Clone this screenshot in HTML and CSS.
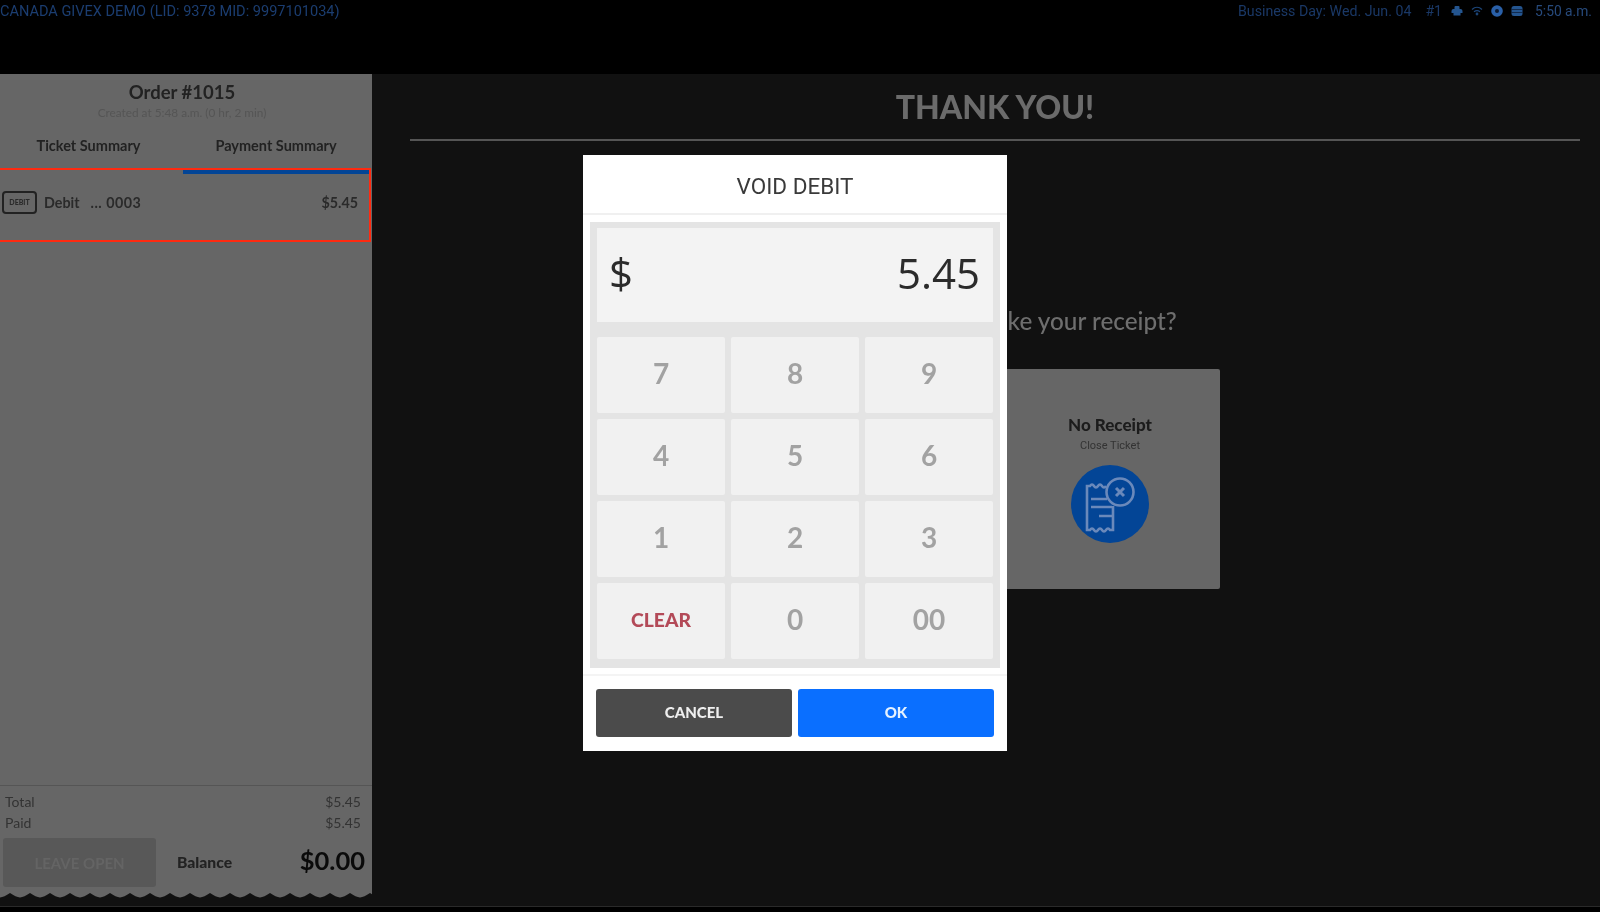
FILE: index.html
```html
<!DOCTYPE html>
<html lang="en">
<head>
<meta charset="utf-8">
<title>Void Debit</title>
<link rel="stylesheet" href="styles.css">
</head>
<body>
<div class="screen">
  <header class="topbar">
    <span class="store">CANADA GIVEX DEMO (LID: 9378 MID: 9997101034)</span>
    <div class="status">
      <span>Business Day: Wed. Jun. 04</span>
      <span class="term">#1</span>
      <svg class="ico" viewBox="0 0 12 12"><path d="M.5 8V6q0-2 2-2h1V2q0-1 1-1h3q1 0 1 1v2h1q2 0 2 2v2H9.500v2.500h-7V8z" fill="#24558f"/></svg>
      <svg class="ico" viewBox="0 0 12 12" fill="none" stroke="#1c4578" stroke-width="1.2"><path d="M1 4.500c3-2.800 7-2.800 10 0M3 6.800c2-1.600 4-1.600 6 0"/><circle cx="6" cy="9" r=".8" fill="#1c4578"/></svg>
      <svg class="ico" viewBox="0 0 12 12"><circle cx="6" cy="6" r="5.800" fill="#2a60a8"/><circle cx="6" cy="6" r="2" fill="#0a1830"/></svg>
      <svg class="ico" viewBox="0 0 12 12"><rect x=".5" y="1" width="11" height="10" rx="2.500" fill="#24558f"/><path d="M.5 4.500h11M.5 7.500h11" stroke="#0a1830" stroke-width=".7"/></svg>
      <span class="time">5:50 a.m.</span>
    </div>
  </header>
  <div class="body">
    <aside class="side">
      <div class="order">
        <h2>Order #1015</h2>
        <p>Created at 5:48 a.m. (0 hr, 2 min)</p>
      </div>
      <div class="tabs">
        <div class="tab">Ticket Summary</div>
        <div class="tab">Payment Summary</div>
      </div>
      <div class="tabline"><i></i></div>
      <div class="pay">
        <span class="card-ico">DEBIT</span>
        <span>Debit</span>
        <span class="digits">... 0003</span>
        <span class="amt">$5.45</span>
      </div>
      <div class="spacer"></div>
      <div class="totals">
        <div class="row"><span>Total</span><span>$5.45</span></div>
        <div class="row"><span>Paid</span><span>$5.45</span></div>
      </div>
      <div class="balance">
        <div class="leave">LEAVE OPEN</div>
        <span class="bal-label">Balance</span>
        <span class="bal-val">$0.00</span>
      </div>
      <svg class="wave" height="7" width="372"><defs><pattern id="w" width="20" height="7" patternUnits="userSpaceOnUse"><path d="M0 7V5.500Q4 5 10 1Q16 5 20 5.500V7Z" fill="#111"/></pattern></defs><rect width="372" height="7" fill="url(#w)"/></svg>
    </aside>
    <main class="main">
      <h1>THANK YOU!</h1>
      <p class="q">How would you take your receipt?</p>
      <div class="cards">
        <div class="rcard"></div>
        <div class="rcard">
          <b>No Receipt</b>
          <small>Close Ticket</small>
          <svg class="rico" viewBox="0 0 78 78">
            <circle cx="39" cy="39" r="39" fill="#034596"/>
            <g fill="none" stroke="#6a89bb" stroke-width="2.600">
              <path d="M35 21q-2 3-4 0t-4 0t-4 0t-4 0l-3 0V65l3 0q2-3 4 0t4 0t4 0t4 0t4 0h3V41"/>
              <circle cx="49" cy="27" r="13.500"/>
              <path d="M45 23l8 8M53 23l-8 8" stroke-width="3"/>
              <path d="M20 34h16M20 42h21M28 51h13"/>
            </g>
          </svg>
        </div>
      </div>
    </main>
  </div>
  <div class="foot"></div>
</div>
<div class="modal">
  <div class="m-title">VOID DEBIT</div>
  <div class="pad">
    <div class="display"><span>$</span><span>5.45</span></div>
    <div class="keys">
      <div class="key">7</div><div class="key">8</div><div class="key">9</div>
      <div class="key">4</div><div class="key">5</div><div class="key">6</div>
      <div class="key">1</div><div class="key">2</div><div class="key">3</div>
      <div class="key clear">CLEAR</div><div class="key">0</div><div class="key">00</div>
    </div>
  </div>
  <div class="actions">
    <div class="btn cancel">CANCEL</div>
    <div class="btn ok">OK</div>
  </div>
</div>
<div class="hl"></div>
</body>
</html>
```
FILE: styles.css
```css
* { box-sizing: border-box; }
html, body { margin: 0; height: 100%; background: #000; overflow: hidden; }
body { font-family: "Lato", "Open Sans", sans-serif; position: relative; filter: blur(.5px); }
.screen { height: 912px; display: flex; flex-direction: column; }
.topbar { height: 74px; flex: none; background: #000; display: flex; justify-content: space-between; align-items: flex-start; padding: 3px 8px 0 0; color: #1b3d70; font: 14.550px "Roboto", sans-serif; }
.status { display: flex; align-items: center; font-size: 14.200px; color: #1a3866; }
.term { margin-left: 14px; }
.ico { width: 12px; height: 12px; margin-left: 8px; }
.term + .ico { margin-left: 9px; }
.time { margin-left: 12px; font-size: 13.800px; color: #274a7c; }
.body { flex: 1; display: flex; min-height: 0; background: #111; }
.side { width: 372px; flex: none; margin-bottom: 7px; background: #666; display: flex; flex-direction: column; color: #1b1b1b; }
.order { text-align: center; padding: 7px 8px 0 0; }
.order h2 { margin: 0; font-size: 18.500px; font-weight: 700; color: #222; line-height: 22px; }
.order p { margin: 3px 0 0; font-size: 11.800px; color: #555; line-height: 14px; }
.tabs { display: flex; margin-top: 12px; height: 26px; align-items: center; }
.tab { width: 183px; padding-right: 6px; text-align: center; font-size: 14.500px; font-weight: 700; color: #222; }
.tab + .tab { padding: 0; width: 186px; white-space: nowrap; }
.tabline { height: 4px; margin-top: 12px; }
.tabline i { display: block; width: 186px; height: 4px; margin-left: 183px; background: #034596; }
.pay { display: flex; align-items: center; height: 56px; padding: 0 14px 0 2px; font-size: 14.300px; font-weight: 700; color: #2a2a2a; }
.card-ico { width: 35px; height: 23px; border: 2px solid #222; border-radius: 4px; font-size: 7px; font-weight: 900; display: flex; align-items: center; justify-content: center; margin-right: 7px; }
.digits { margin-left: 11px; letter-spacing: .5px; }
.amt { margin-left: auto; }
.spacer { flex: 1; }
.totals { border-top: 1px solid #555; padding: 5px 11px 0 5px; font-size: 14px; color: #333; }
.row { display: flex; justify-content: space-between; line-height: 21px; }
.balance { display: flex; align-items: center; padding: 0 7px 0 3px; margin-top: 5px; height: 49px; }
.leave { width: 153px; height: 49px; border-radius: 3px; background: #585858; color: #646464; font-size: 15px; font-weight: 700; display: flex; align-items: center; justify-content: center; }
.bal-label { margin-left: 21px; margin-bottom: 1px; font-size: 15.700px; font-weight: 900; color: #222; }
.bal-val { margin-left: auto; margin-bottom: 5px; font-size: 25.500px; font-weight: 700; color: #0a0a0a; }
.wave { display: block; margin-top: 5px; }
.main { flex: 1; background: #111; padding: 0 20px 0 38px; color: #777; }
.main h1 { margin: 0; height: 67px; border-bottom: 2px solid #555; text-align: center; font-size: 32px; font-weight: 900; color: #6b6b6b; line-height: 66px; }
.q { margin: 160px 0 0; text-align: center; font-size: 24.300px; line-height: 40px; color: #6e6e6e; font-weight: 500; }
.cards { display: flex; justify-content: center; gap: 10px; margin-top: 28px; }
.rcard { width: 220px; height: 220px; background: #666; border-radius: 2px; display: flex; flex-direction: column; align-items: center; padding-top: 46px; color: #1c1c1c; }
.rcard b { font-size: 17px; font-weight: 900; line-height: 20px; }
.rcard small { font: 11px "Roboto", sans-serif; color: #333; margin-top: 4px; line-height: 14px; }
.rico { width: 78px; height: 78px; margin-top: 12px; }
.foot { height: 6px; flex: none; background: #000; border-top: 1px solid #2a2a2a; }
.modal { position: absolute; left: 583px; top: 155px; width: 424px; height: 596px; background: #fff; display: flex; flex-direction: column; }
.m-title { height: 60px; flex: none; padding-top: 3px; display: flex; align-items: center; justify-content: center; font: 400 22.500px "Roboto", sans-serif; color: #3a3a3a; border-bottom: 2px solid #f0f0f0; }
.pad { margin: 7px 7px 0; background: #e4e4e4; padding: 6px 7px 9px; }
.display { height: 94px; margin-bottom: 15px; background: #f3f3f3; display: flex; align-items: center; justify-content: space-between; padding: 0 13px 6px 12px; font: 400 42px "Open Sans", sans-serif; color: #2b2b2b; }
.keys { display: grid; grid-template-columns: repeat(3, 128px); grid-auto-rows: 76px; gap: 6px; }
.key { background: #f1f1f1; border-radius: 2px; padding-bottom: 4px; display: flex; align-items: center; justify-content: center; font-size: 28px; font-weight: 700; color: #a2a2a2; }
.key.clear { font-size: 19.300px; font-weight: 900; color: #b34a58; }
.actions { display: flex; gap: 6px; margin-top: 6px; border-top: 2px solid #f4f4f4; padding: 13px 13px 0; }
.btn { flex: 1; height: 48px; padding-bottom: 2px; border-radius: 3px; display: flex; align-items: center; justify-content: center; color: #eee; font-size: 15px; font-weight: 900; }
.cancel { background: #4b4b4b; }
.ok { background: #0a6fff; color: #e6f2ff; }
.hl { position: absolute; left: -2px; top: 168px; width: 373px; height: 74px; border: 2px solid #ff2a10; }
```
